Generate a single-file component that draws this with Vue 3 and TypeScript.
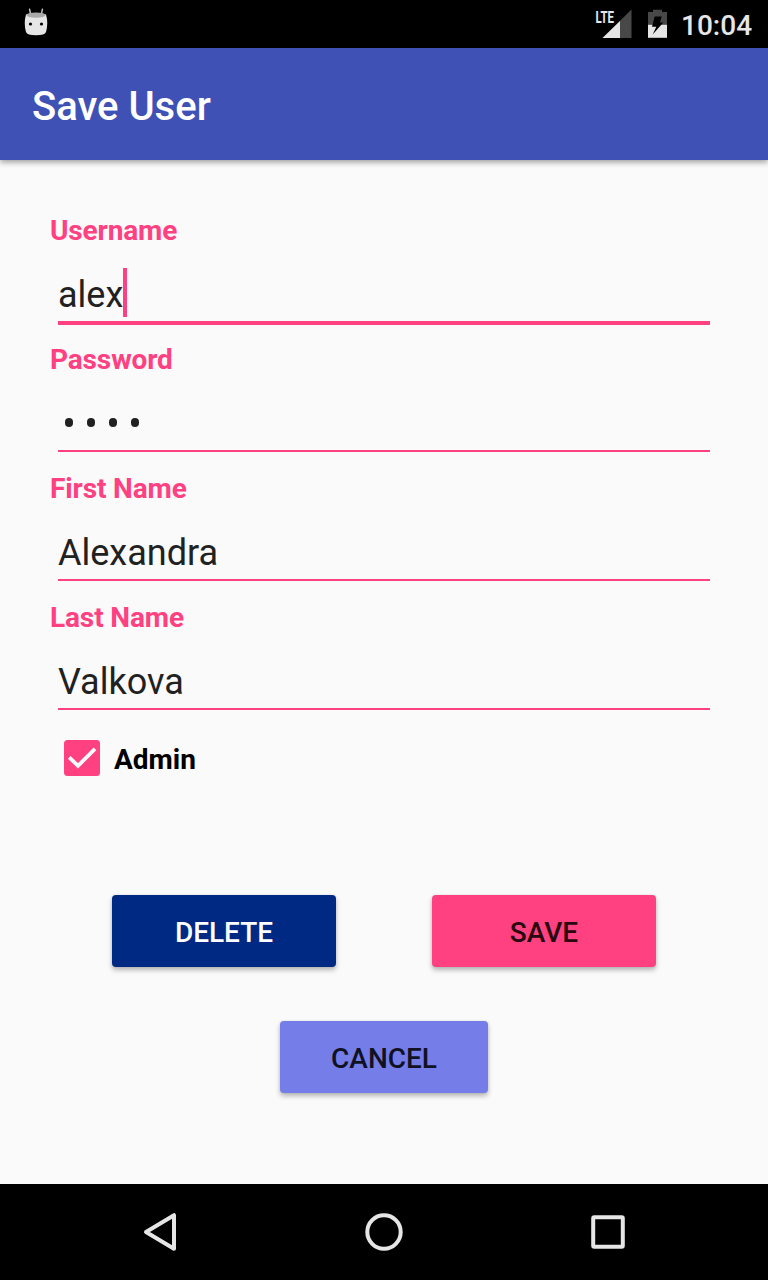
<script setup lang="ts">
import { ref } from 'vue'

interface Field {
  label: string
  value: string
  focused?: boolean
  secret?: boolean
}

const fields = ref<Field[]>([
  { label: 'Username', value: 'alex', focused: true },
  { label: 'Password', value: '1234', secret: true },
  { label: 'First Name', value: 'Alexandra' },
  { label: 'Last Name', value: 'Valkova' },
])
const admin = ref(true)
</script>

<template>
  <div class="screen">
    <header class="status">
      <svg class="droid" width="28" height="30" viewBox="0 0 28 30">
        <path d="M8.700 7.500 7.600 2.300M19.300 7.500 20.400 2.300" stroke="#ccc" stroke-width="1.400" stroke-linecap="round" />
        <path d="M4 7.500Q14 4.500 24 7.500Q26.500 16 24 25Q23 28.300 14 28.300Q5 28.300 4 25Q1.500 16 4 7.500Z" fill="#e6e6e6" />
        <ellipse cx="14" cy="8.100" rx="9.700" ry="2.600" fill="#aaa" />
        <circle cx="8.500" cy="17" r="1.600" fill="#000" />
        <circle cx="19.500" cy="17" r="1.600" fill="#000" />
      </svg>
      <svg class="signal" width="38" height="30" viewBox="0 0 38 30">
        <path d="M36.500 1.500V30H7.500Z" fill="#484848" />
        <path d="M25 13V30H7.500Z" fill="#e6e6e6" />
        <text x="0.500" y="14.500" textLength="18.500" lengthAdjust="spacingAndGlyphs" class="lte">LTE</text>
      </svg>
      <svg class="battery" width="20" height="30" viewBox="0 0 20 30">
        <path d="M5 .7h9v2.300h5v13H0V3H5Z" fill="#484848" />
        <path d="M0 15.800H19v13H0Z" fill="#e6e6e6" />
        <path d="M6.700 7.500H13.700L12 13.500H15.300L4.700 25.600 8.300 17.700H4Z" fill="#000" />
      </svg>
      <time class="clock">10:04</time>
    </header>

    <div class="appbar"><h1>Save User</h1></div>

    <main class="form">
      <div v-for="f in fields" :key="f.label" class="field">
        <label>{{ f.label }}</label>
        <div class="entry" :class="{ focused: f.focused }">
          <div v-if="f.secret" class="dots">
            <i v-for="(c, n) in f.value" :key="n" />
          </div>
          <span v-else>{{ f.value }}</span>
          <b v-if="f.focused" class="caret" />
        </div>
      </div>

      <div class="check" @click="admin = !admin">
        <svg width="36" height="36" viewBox="0 0 36 36">
          <rect width="36" height="36" rx="3.500" fill="#ff4081" />
          <path v-if="admin" d="M5.200 17.300 14 25.800 31 8.800" fill="none" stroke="#fafafa" stroke-width="3.800" />
        </svg>
        <span>Admin</span>
      </div>

      <div class="actions">
        <button class="delete">DELETE</button>
        <button class="save">SAVE</button>
      </div>
      <button class="cancel">CANCEL</button>
    </main>

    <nav class="navbar">
      <svg width="40" height="40" viewBox="0 0 40 40"><path d="M34 3.200V36.800L6 20Z" /></svg>
      <svg width="40" height="40" viewBox="0 0 40 40"><circle cx="20" cy="20" r="16.700" /></svg>
      <svg width="40" height="40" viewBox="0 0 40 40"><rect x="5.200" y="5.200" width="29.600" height="29.600" rx="1" /></svg>
    </nav>
  </div>
</template>

<style>
body {
  margin: 0;
}
</style>

<style scoped>
.screen {
  width: 768px;
  height: 1280px;
  display: flex;
  flex-direction: column;
  background: #fafafa;
  font-family: Roboto, 'Liberation Sans', sans-serif;
  overflow: hidden;
}
.status {
  height: 48px;
  background: #000;
  display: flex;
  align-items: flex-start;
  box-sizing: border-box;
  padding: 0 17px 0 22px;
}
.droid {
  margin-top: 7px;
  fill: none;
}
.signal {
  margin: 8px 0 0 auto;
  overflow: visible;
}
.lte {
  font-size: 17px;
  font-weight: 700;
  fill: #e6e6e6;
}
.battery {
  margin: 9px 0 0 15px;
}
.clock {
  margin-left: 13px;
  width: 70px;
  white-space: nowrap;
  font-size: 28px;
  font-weight: 500;
  line-height: 33px;
  padding-top: 9px;
  color: #e6e6e6;
}
.appbar {
  height: 112px;
  background: #3f51b5;
  box-shadow: 0 2px 6px rgba(0, 0, 0, 0.4);
  padding-left: 32px;
  display: flex;
  align-items: center;
}
h1 {
  margin: 5px 0 0;
  font-size: 40px;
  line-height: 47px;
  font-weight: 500;
  color: #fff;
}
.form {
  flex: 1;
  padding: 54px 50px 0;
  display: flex;
  flex-direction: column;
}
.field {
  height: 129px;
}
.field label {
  display: block;
  font-size: 28px;
  line-height: 33px;
  font-weight: 700;
  letter-spacing: -0.13px;
  color: #ff4081;
}
.entry {
  height: 53px;
  margin: 0 8px;
  padding-top: 21px;
  display: flex;
  border-bottom: 2px solid #ff4081;
  font-size: 36px;
  line-height: 54px;
  color: #212121;
}
.entry.focused {
  border-bottom-width: 4px;
}
.caret {
  width: 4px;
  height: 49px;
  background: #ff4081;
}
.dots {
  display: flex;
  gap: 14px;
  padding: 21px 0 0 7px;
}
.dots i {
  width: 8px;
  height: 9px;
  border-radius: 4px;
  background: #212121;
}
.check {
  display: flex;
  gap: 14px;
  margin: 10px 0 0 14px;
  height: 36px;
  font-size: 28px;
  line-height: 40px;
  font-weight: 700;
  color: #000;
}
.actions {
  display: flex;
  justify-content: space-between;
  margin: 119px 62px 54px;
}
button {
  height: 72px;
  width: 224px;
  border: 0;
  padding: 2px 0 0;
  border-radius: 4px;
  font: 500 28px/33px Roboto, 'Liberation Sans', sans-serif;
  box-shadow: 0 3px 5px rgba(0, 0, 0, 0.28), 0 0 2px rgba(0, 0, 0, 0.1);
}
.delete {
  background: #002984;
  color: #fff;
}
.save {
  background: #ff4081;
  color: #27090f;
}
.cancel {
  width: 208px;
  align-self: center;
  background: #757de8;
  color: #101123;
}
.navbar {
  height: 96px;
  background: #000;
  display: flex;
  align-items: center;
  justify-content: space-between;
  padding: 0 140px;
}
.navbar svg {
  fill: none;
  stroke: #e6e6e6;
  stroke-width: 4;
  stroke-linejoin: round;
}
</style>
